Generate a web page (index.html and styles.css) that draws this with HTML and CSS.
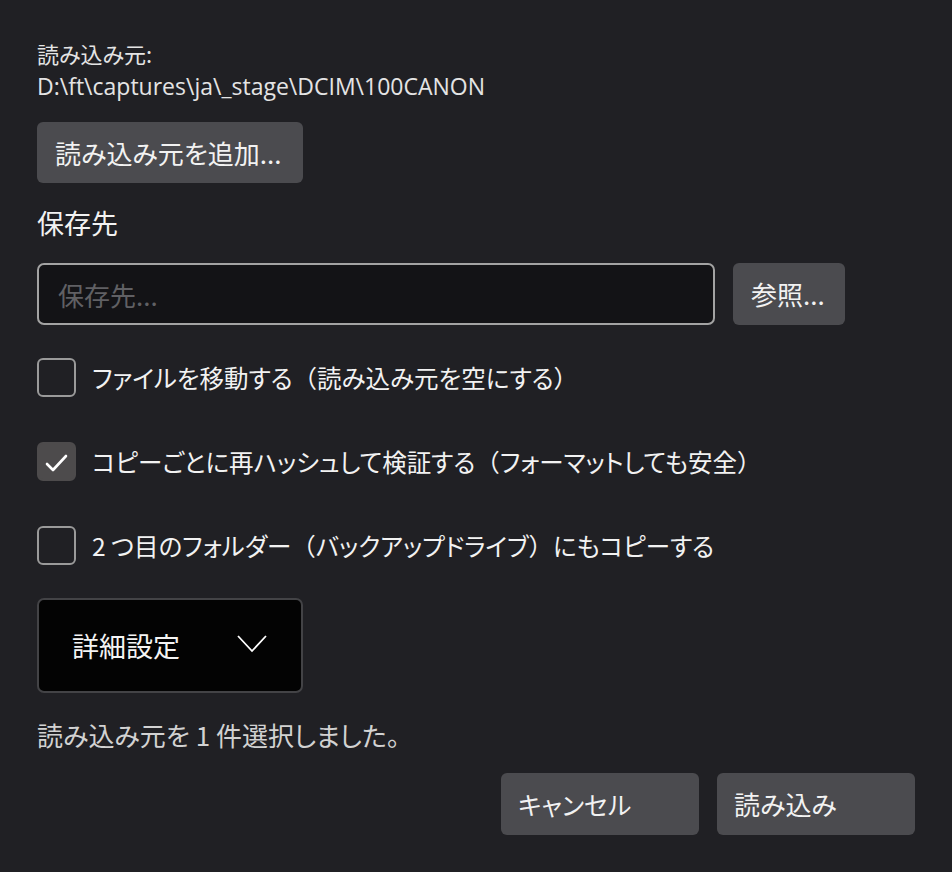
FILE: index.html
```html
<!DOCTYPE html>
<html lang="ja">
<head>
    <meta charset="UTF-8">
    <meta name="viewport" content="width=device-width, initial-scale=1.0">
    <title>読み込み</title>
    <link rel="stylesheet" href="styles.css">
</head>
<body>
    <div class="dialog">
        <div class="source">
            <div>読み込み元:</div>
            <div class="path">D:\ft\captures\ja\_stage\DCIM\100CANON</div>
        </div>
        <button class="btn add-source">読み込み元を追加...</button>

        <div class="field-label">保存先</div>
        <div class="dest-row">
            <input class="dest-input" type="text" placeholder="保存先...">
            <button class="btn browse">参照...</button>
        </div>

        <label class="check">
            <input type="checkbox">
            <span class="box"></span>
            <span class="check-text">ファイルを移動する<span class="paren">（</span>読み込み元を空にする<span class="paren">）</span></span>
        </label>
        <label class="check">
            <input type="checkbox" checked>
            <span class="box">
                <svg viewBox="0 0 39 39" width="39" height="39"><polyline points="10,22 16,28 29,14" /></svg>
            </span>
            <span class="check-text">コピーごとに再ハッシュして検証する<span class="paren">（</span>フォーマットしても安全<span class="paren">）</span></span>
        </label>
        <label class="check">
            <input type="checkbox">
            <span class="box"></span>
            <span class="check-text">2 つ目のフォルダー<span class="paren">（</span>バックアップドライブ<span class="paren">）</span>にもコピーする</span>
        </label>

        <button class="details">
            <span>詳細設定</span>
            <svg viewBox="0 0 30 18" width="30" height="18"><polyline points="1,1 15,16 29,1" /></svg>
        </button>

        <p class="status">読み込み元を 1 件選択しました。</p>

        <div class="actions">
            <button class="btn action cancel">キャンセル</button>
            <button class="btn action">読み込み</button>
        </div>
    </div>
</body>
</html>
```

FILE: styles.css
```css
body {
    margin: 0;
    background-color: #202024;
    color: #ececec;
    font-family: "Noto Sans CJK JP", sans-serif;
    font-feature-settings: "palt";
}

.dialog {
    padding: 37px 37px 0;
}

.source {
    font-size: 22px;
    line-height: 33px;
    color: #e4e4e4;
}

.source .path {
    font-family: "Open Sans", "Noto Sans CJK JP", sans-serif;
    font-size: 23px;
}

.btn {
    font-family: inherit;
    font-feature-settings: "palt";
    background-color: #4b4b4f;
    color: #f2f2f2;
    border: none;
    border-radius: 6px;
    cursor: pointer;
    text-align: left;
    padding: 0 18px;
    line-height: 1;
}

.add-source {
    display: block;
    margin-top: 19px;
    height: 61px;
    width: 266px;
    font-size: 26px;
}

.field-label {
    margin-top: 20px;
    font-size: 27px;
    line-height: 40px;
    color: #f2f2f2;
}

.dest-row {
    display: flex;
    gap: 18px;
    margin-top: 20px;
}

.dest-input {
    box-sizing: border-box;
    width: 678px;
    height: 62px;
    background-color: #131316;
    border: 2px solid #a3a3a3;
    border-radius: 7px;
    padding: 0 19px;
    font-family: inherit;
    font-feature-settings: "palt";
    font-size: 26px;
    color: #ececec;
    outline: none;
}

.dest-input::placeholder {
    color: #606064;
}

.browse {
    width: 112px;
    height: 62px;
    font-size: 26px;
}

.check {
    display: flex;
    align-items: center;
    gap: 16px;
    margin-top: 45px;
    height: 39px;
    cursor: pointer;
}

.dest-row + .check {
    margin-top: 33px;
}

.check input {
    display: none;
}

.box {
    box-sizing: border-box;
    flex: none;
    width: 39px;
    height: 39px;
    border: 2px solid #9a9a9a;
    border-radius: 6px;
}

.check input:checked + .box {
    background-color: #4d4b4c;
    border-color: #4d4b4c;
}

.box svg {
    display: block;
    margin: -2px;
    fill: none;
    stroke: #ffffff;
    stroke-width: 2.6;
    stroke-linecap: round;
    stroke-linejoin: round;
}

.check-text {
    font-size: 24.5px;
    color: #f2f2f2;
}

/* full-width brackets keep their space, as in the dialog font */
.paren {
    font-feature-settings: normal;
}

.details {
    display: flex;
    align-items: center;
    justify-content: space-between;
    box-sizing: border-box;
    margin-top: 33px;
    width: 266px;
    height: 95px;
    padding: 0 34px 0 33px;
    background-color: #030303;
    border: 2px solid #434346;
    border-radius: 7px;
    color: #f4f4f4;
    font-family: inherit;
    font-feature-settings: "palt";
    font-size: 27px;
    cursor: pointer;
}

.details svg {
    fill: none;
    stroke: #ffffff;
    stroke-width: 1.8;
    margin-top: -4px;
}

.status {
    margin: 24px 0 0;
    font-size: 26px;
    line-height: 36px;
    color: #d2d2d2;
}

.actions {
    display: flex;
    justify-content: flex-end;
    gap: 18px;
    margin-top: 20px;
}

.action {
    width: 198px;
    height: 62px;
    font-size: 26px;
    padding-left: 17px;
}

.action.cancel {
    font-size: 25px;
}
```
